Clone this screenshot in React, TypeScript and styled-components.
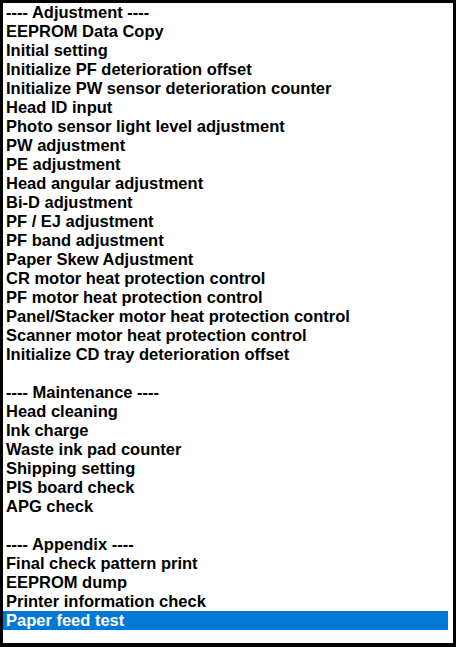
import styled, { createGlobalStyle } from 'styled-components';

const GlobalStyle = createGlobalStyle`
  html, body {
    margin: 0;
    padding: 0;
    background: #ffffff;
  }
`;

const items: string[] = [
  '---- Adjustment ----',
  'EEPROM Data Copy',
  'Initial setting',
  'Initialize PF deterioration offset',
  'Initialize PW sensor deterioration counter',
  'Head ID input',
  'Photo sensor light level adjustment',
  'PW adjustment',
  'PE adjustment',
  'Head angular adjustment',
  'Bi-D adjustment',
  'PF / EJ adjustment',
  'PF band adjustment',
  'Paper Skew Adjustment',
  'CR motor heat protection control',
  'PF motor heat protection control',
  'Panel/Stacker motor heat protection control',
  'Scanner motor heat protection control',
  'Initialize CD tray deterioration offset',
  '',
  '---- Maintenance ----',
  'Head cleaning',
  'Ink charge',
  'Waste ink pad counter',
  'Shipping setting',
  'PIS board check',
  'APG check',
  '',
  '---- Appendix ----',
  'Final check pattern print',
  'EEPROM dump',
  'Printer information check',
  'Paper feed test',
];

const selectedIndex = 32;

const ListBox = styled.div`
  box-sizing: border-box;
  width: 456px;
  height: 647px;
  border-style: solid;
  border-color: #000000;
  border-width: 3px 3px 4px 3px;
  padding: 0 5px 0 0;
  background: #ffffff;
  display: flex;
  flex-direction: column;
  overflow: hidden;
`;

const Row = styled.div<{ $selected?: boolean }>`
  height: 19px;
  line-height: 19px;
  padding-left: 3px;
  font-family: 'Liberation Sans', Arial, sans-serif;
  font-weight: 700;
  font-size: 16.5px;
  white-space: nowrap;
  color: ${(p) => (p.$selected ? '#ffffff' : '#000000')};
  background: ${(p) => (p.$selected ? '#0078d7' : 'transparent')};
`;

export default function App() {
  return (
    <>
      <GlobalStyle />
      <ListBox>
        {items.map((text, i) => (
          <Row key={i} $selected={i === selectedIndex}>
            {text}
          </Row>
        ))}
      </ListBox>
    </>
  );
}
